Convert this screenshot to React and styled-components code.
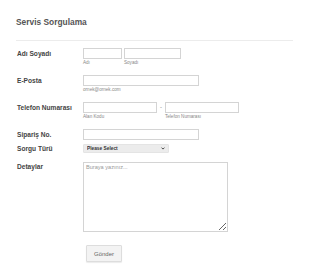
import styled, { createGlobalStyle } from 'styled-components'

const Global = createGlobalStyle`
  body {
    margin: 0;
    background: #fff;
    font-family: "Liberation Sans", Arial, sans-serif;
  }
`

const App = () => {
  return (
    <Page>
      <Global />
      <Title>Servis Sorgulama</Title>
      <Divider />
      <Form>
        <Row>
          <Label>Adı Soyadı</Label>
          <Fields>
            <Field>
              <Input $w={39} />
              <Sub>Adı</Sub>
            </Field>
            <Field>
              <Input $w={57} />
              <Sub>Soyadı</Sub>
            </Field>
          </Fields>
        </Row>
        <Row>
          <Label>E-Posta</Label>
          <Field>
            <Input $w={116} />
            <Sub>ornek@ornek.com</Sub>
          </Field>
        </Row>
        <Row>
          <Label>Telefon Numarası</Label>
          <Fields>
            <Field>
              <Input $w={74} />
              <Sub>Alan Kodu</Sub>
            </Field>
            <Dash>-</Dash>
            <Field>
              <Input $w={74} />
              <Sub>Telefon Numarası</Sub>
            </Field>
          </Fields>
        </Row>
        <Row $gap={4}>
          <Label>Sipariş No.</Label>
          <Input $w={116} />
        </Row>
        <Row>
          <Label $lh={9}>Sorgu Türü</Label>
          <SelectWrap>
            <Select>
              <option>Please Select</option>
            </Select>
            <Chevron viewBox="0 0 8 6">
              <path d="M1 1.2 L4 4.2 L7 1.2" fill="none" stroke="#222" strokeWidth="1.6" />
            </Chevron>
          </SelectWrap>
        </Row>
        <Row $gap={13}>
          <Label $lh={9}>Detaylar</Label>
          <TextArea placeholder="Buraya yazınız..." />
        </Row>
        <Row>
          <span />
          <Button>Gönder</Button>
        </Row>
      </Form>
    </Page>
  )
}
export default App

const Page = styled.div`
  width: 310px;
  height: 272px;
  box-sizing: border-box;
  padding: 17px 17px 0 16px;
  overflow: hidden;
`
const Title = styled.h1`
  margin: 0;
  font-size: 8.4px;
  line-height: 11px;
  font-weight: bold;
  color: #555;
`
const Divider = styled.div`
  height: 1px;
  background: #ececec;
  margin: 12px 0 7px;
`
const Form = styled.div`
  display: flex;
  flex-direction: column;
`
const Row = styled.div`
  display: grid;
  grid-template-columns: 67px 1fr;
  align-items: start;
  margin-bottom: ${p => p.$gap ?? 9}px;
`
const Label = styled.label`
  font-size: 6.6px;
  line-height: ${p => p.$lh ?? 11}px;
  font-weight: bold;
  color: #444;
  padding-left: 1px;
  white-space: nowrap;
`
const Fields = styled.div`
  display: flex;
  gap: 2px;
  align-items: flex-start;
`
const Field = styled.div`
  display: flex;
  flex-direction: column;
`
const Input = styled.input`
  display: block;
  box-sizing: border-box;
  width: ${p => p.$w}px;
  height: 11px;
  margin: 0;
  padding: 0;
  border: 1px solid #d4d4d4;
  background: #fff;
`
const Sub = styled.span`
  font-size: 4.6px;
  line-height: 6px;
  color: #888;
  padding-top: 1px;
  white-space: nowrap;
`
const Dash = styled.span`
  font-size: 6px;
  line-height: 11px;
  color: #777;
  margin: 0 1px;
`
const SelectWrap = styled.div`
  position: relative;
  width: 86px;
  height: 9px;
`
const Select = styled.select`
  display: block;
  appearance: none;
  box-sizing: border-box;
  width: 86px;
  height: 9px;
  margin: 0;
  padding: 0 0 0 3px;
  border: 1px solid #e4e4e4;
  border-radius: 1px;
  background: #ececec;
  font-family: "Liberation Sans", Arial, sans-serif;
  font-size: 4.8px;
  line-height: 7px;
  font-weight: bold;
  color: #333;
  outline: none;
`
const Chevron = styled.svg`
  position: absolute;
  right: 4px;
  top: 3px;
  width: 4px;
  height: 3px;
  pointer-events: none;
`
const TextArea = styled.textarea`
  display: block;
  box-sizing: border-box;
  width: 145px;
  height: 70px;
  margin: 0;
  padding: 1px 2px;
  border: 1px solid #d4d4d4;
  font-family: "Liberation Sans", Arial, sans-serif;
  font-size: 5.6px;
  &::placeholder {
    color: #999;
  }
`
const Button = styled.button`
  box-sizing: border-box;
  margin-left: 3px;
  width: 36px;
  height: 17px;
  padding: 0;
  border: 1px solid #ddd;
  border-radius: 1px;
  background: #f3f3f3;
  font-family: "Liberation Sans", Arial, sans-serif;
  font-size: 6px;
  color: #666;
  box-shadow: 0 1px 1px rgba(0, 0, 0, 0.08);
`
